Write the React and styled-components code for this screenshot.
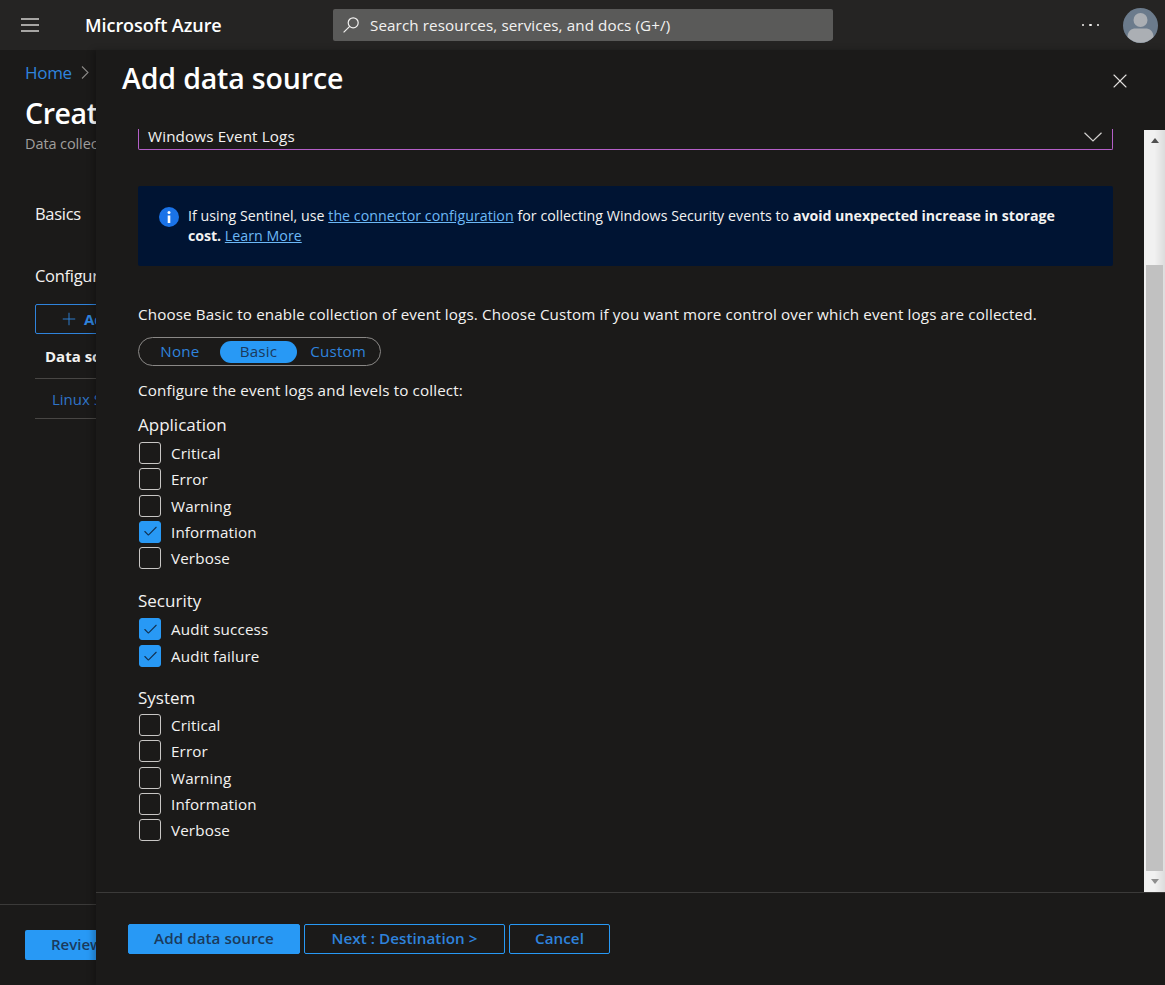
import React from "react";
import styled, { createGlobalStyle } from "styled-components";
import { X, Plus, Check } from "lucide-react";

const FONT = `"Open Sans", "Noto Sans", "Liberation Sans", sans-serif`;

const GlobalStyle = createGlobalStyle`
    html, body {
        margin: 0;
        padding: 0;
        height: 100%;
        background: #1b1a19;
    }
    body {
        font-family: ${FONT};
        color: #fff;
    }
    * { box-sizing: border-box; }
`;

const Page = styled.div`
    width: 1165px;
    height: 985px;
    position: relative;
    overflow: hidden;
    background: #1b1a19;
`;

const TopBar = styled.header`
    height: 50px;
    background: #252423;
    display: flex;
    align-items: center;
    padding-left: 21px;
`;

const LineIcon = styled.svg`
    flex: none;
    display: block;
    fill: none;
    stroke: currentColor;
`;

const MenuBtn = styled.div`
    width: 18px;
    display: flex;
    color: #d2d0ce;
`;

const Brand = styled.div`
    margin-left: 46px;
    width: 248px;
    font-size: 18px;
    font-weight: 600;
    letter-spacing: -0.05px;
`;

const SearchBox = styled.div`
    width: 500px;
    height: 32px;
    background: #5a5a59;
    border-radius: 2px;
    display: flex;
    align-items: center;
    gap: 11px;
    padding-left: 10px;
    font-size: 15.2px;
    letter-spacing: 0.1px;
    color: #f3f2f1;
`;

const BarRight = styled.div`
    margin-left: auto;
    display: flex;
    align-items: center;
    padding-right: 7px;
    gap: 24px;
`;

const Dots = styled.div`
    display: flex;
    gap: 5px;
    span {
        width: 2.5px;
        height: 2.5px;
        border-radius: 50%;
        background: #f3f2f1;
    }
`;

const Avatar = styled.svg`
    width: 35px;
    height: 35px;
    display: block;
`;

/* page behind the panel */
const Behind = styled.div`
    padding: 10px 0 0 25px;
    height: 935px;
    position: relative;
    display: flex;
    flex-direction: column;
`;

const Crumb = styled.div`
    display: flex;
    align-items: center;
    gap: 9px;
    font-size: 17px;
    letter-spacing: -0.3px;
    color: #2f83dc;
    height: 24px;
    svg { color: #8a8886; }
`;

const PageTitle = styled.div`
    margin-top: 11px;
    font-size: 28.5px;
    font-weight: 600;
    line-height: 36px;
    letter-spacing: -0.4px;
`;

const PageSub = styled.div`
    margin-top: 3px;
    font-size: 14.5px;
    color: #a19f9d;
    white-space: nowrap;
    letter-spacing: -0.1px;
`;

const SideItem = styled.div`
    font-size: 16.5px;
    letter-spacing: -0.3px;
    margin-top: ${(p) => p.$top}px;
    margin-left: 10px;
    color: #f3f2f1;
    line-height: 22px;
`;

const AddBtn = styled.div`
    margin: 17px 0 0 10px;
    width: 100px;
    height: 30px;
    border: 1px solid #2f83dc;
    border-radius: 2px;
    display: flex;
    align-items: center;
    gap: 5px;
    padding-left: 23px;
    color: #2f83dc;
    font-size: 15px;
    font-weight: 700;
`;

const TableRow = styled.div`
    margin-left: 10px;
    width: 100px;
    height: ${(p) => p.$h}px;
    border-bottom: 1px solid #484644;
    display: flex;
    align-items: center;
    padding-left: ${(p) => p.$pad}px;
    font-size: 15px;
    font-weight: ${(p) => (p.$head ? 700 : 400)};
    color: ${(p) => (p.$head ? "#f3f2f1" : "#2f74c8")};
    white-space: nowrap;
`;

const BehindFoot = styled.div`
    position: absolute;
    left: 0;
    right: 0;
    bottom: 0;
    height: 81px;
    border-top: 1px solid #3b3a39;
    padding: 25px 0 0 25px;
`;

const ReviewBtn = styled.div`
    width: 120px;
    height: 30px;
    background: #2899f5;
    border-radius: 2px;
    color: #1b3a5c;
    font-size: 15px;
    font-weight: 600;
    white-space: nowrap;
    display: flex;
    align-items: center;
    padding: 0 0 2px 26px;
`;

/* blade over the page */
const Panel = styled.section`
    position: absolute;
    top: 50px;
    left: 96px;
    right: 0;
    bottom: 0;
    background: #1b1a19;
    display: flex;
    flex-direction: column;
    box-shadow: -3px 0 6px rgba(0, 0, 0, 0.25);
`;

const PanelHead = styled.div`
    height: 79px;
    flex: none;
    display: flex;
    justify-content: space-between;
    padding: 7px 33px 0 26px;
`;

const PanelTitle = styled.h1`
    margin: 0;
    font-size: 28.5px;
    line-height: 42px;
    font-weight: 600;
    letter-spacing: -0.15px;
`;

const CloseBtn = styled.div`
    margin-top: 12px;
    color: #e1dfdd;
    display: flex;
    height: 24px;
`;

const PanelBody = styled.div`
    height: 764px;
    flex: none;
    display: flex;
    border-bottom: 1px solid #3b3a39;
`;

const Content = styled.div`
    flex: 1;
    padding: 0 31px 0 42px;
`;

const Select = styled.div`
    height: 21px;
    border: 1px solid #b45fc8;
    border-top: none;
    border-radius: 0 0 2px 2px;
    display: flex;
    align-items: center;
    justify-content: space-between;
    padding: 0 10px 7px 9px;
    font-size: 15.2px;
    letter-spacing: 0.14px;
    color: #f3f2f1;
    svg { margin-top: 2px; }
`;

const Notice = styled.div`
    margin-top: 36px;
    height: 80px;
    background: #001433;
    border-radius: 2px;
    display: flex;
    gap: 9px;
    padding: 20px 40px 0 21px;
    font-size: 14.2px;
    line-height: 20px;
    letter-spacing: 0.04px;
    color: #f3f2f1;
    b { font-weight: 700; letter-spacing: -0.05px; }
    a {
        color: #6cb8f6;
        text-decoration: underline;
    }
`;

const InfoIcon = styled.svg`
    width: 20px;
    height: 20px;
    flex: none;
    margin-top: 1px;
`;

const Para = styled.p`
    margin: ${(p) => p.$top}px 0 0;
    font-size: 15.2px;
    line-height: 20px;
    letter-spacing: 0.14px;
    color: #f3f2f1;
    white-space: nowrap;
`;

const Toggle = styled.div`
    margin-top: 13px;
    width: 243px;
    height: 29px;
    border: 1px solid #8a8886;
    border-radius: 15px;
    display: flex;
    align-items: center;
    padding: 0 3px;
`;

const ToggleOpt = styled.div`
    height: 22px;
    width: ${(p) => p.$w}px;
    padding: 0 ${(p) => p.$padR || 0}px 2px ${(p) => p.$padL || 0}px;
    border-radius: 11px;
    display: flex;
    align-items: center;
    justify-content: center;
    font-size: 15.2px;
    letter-spacing: 0.14px;
    color: ${(p) => (p.$on ? "#1b3a5c" : "#2f83dc")};
    background: ${(p) => (p.$on ? "#2899f5" : "transparent")};
`;

const Group = styled.div`
    margin-top: ${(p) => p.$top}px;
`;

const GroupName = styled.div`
    font-size: 17px;
    line-height: 24px;
    color: #f3f2f1;
`;

const CheckList = styled.div`
    margin-top: ${(p) => p.$top}px;
    display: flex;
    flex-direction: column;
    gap: ${(p) => p.$gap}px;
`;

const CheckRow = styled.div`
    display: flex;
    align-items: center;
    gap: 10px;
    height: 22px;
    padding-left: 1px;
    font-size: 15.2px;
    letter-spacing: 0.14px;
    color: #f3f2f1;
`;

const Box = styled.span`
    width: 22px;
    height: 22px;
    border-radius: 3px;
    border: 1px solid ${(p) => (p.$on ? "#2899f5" : "#c8c6c4")};
    background: ${(p) => (p.$on ? "#2899f5" : "transparent")};
    color: #12304f;
    display: flex;
    align-items: center;
    justify-content: center;
`;

const ScrollBar = styled.div`
    width: 21px;
    flex: none;
    margin-top: 1px;
    background: linear-gradient(to right, #f1f1f1 0%, #f1f1f1 50%, #dcdcdc 100%);
    display: flex;
    flex-direction: column;
    align-items: center;
    padding: 0 2px;
`;

const ScrollUp = styled.div`
    height: 135px;
    flex: none;
    width: 100%;
    display: flex;
    justify-content: center;
    padding-top: 8px;
`;

const ScrollDown = styled.div`
    flex: 1;
    width: 100%;
    display: flex;
    align-items: center;
    justify-content: center;
`;

const Arrow = styled.span`
    width: 0;
    height: 0;
    border-left: 4.5px solid transparent;
    border-right: 4.5px solid transparent;
    ${(p) =>
        p.$down
            ? `border-top: 5px solid #8e8e8e;`
            : `border-bottom: 5px solid #505050;`}
`;

const Thumb = styled.div`
    height: 606px;
    flex: none;
    width: 17px;
    background: #c1c1c1;
`;

const PanelFoot = styled.div`
    flex: 1;
    display: flex;
    gap: 4px;
    padding: 31px 0 0 32px;
`;

const Btn = styled.button`
    width: ${(p) => p.$w}px;
    height: 30px;
    border-radius: 2px;
    font-family: ${FONT};
    font-size: 15.2px;
    font-weight: 600;
    letter-spacing: 0.05px;
    padding: 0 0 2px;
    border: 1px solid #2899f5;
    cursor: pointer;
    color: ${(p) => (p.$primary ? "#1b3a5c" : "#2f83dc")};
    background: ${(p) => (p.$primary ? "#2899f5" : "transparent")};
`;

const LEVELS = ["Critical", "Error", "Warning", "Information", "Verbose"];

function Levels({ items, checked, top = 5, gap = 4.25 }) {
    return (
        <CheckList $top={top} $gap={gap}>
            {items.map((name) => {
                const on = checked.includes(name);
                return (
                    <CheckRow key={name}>
                        <Box $on={on}>{on && <Check size={17} strokeWidth={1.5} />}</Box>
                        {name}
                    </CheckRow>
                );
            })}
        </CheckList>
    );
}

export default function App() {
    return (
        <Page>
            <GlobalStyle />
            <TopBar>
                <MenuBtn>
                    <LineIcon width="18" height="14" viewBox="0 0 18 14" strokeWidth="1.3">
                        <path d="M0 1h18M0 7h18M0 13h18" />
                    </LineIcon>
                </MenuBtn>
                <Brand>Microsoft Azure</Brand>
                <SearchBox>
                    <LineIcon width="16" height="16" viewBox="0 0 16 16" strokeWidth="1.2">
                        <circle cx="10.2" cy="5.800" r="5" />
                        <path d="M6.700 9.300L0.600 15.400" />
                    </LineIcon>
                    Search resources, services, and docs (G+/)
                </SearchBox>
                <BarRight>
                    <Dots><span /><span /><span /></Dots>
                    <Avatar viewBox="0 0 35 35">
                        <circle cx="17.500" cy="17.500" r="17.500" fill="#6b7b8c" />
                        <circle cx="17.500" cy="12" r="7" fill="#abafb4" />
                        <path d="M4.500 29c0-6 4-8.500 8-8.500h10c4 0 8 2.500 8 8.500a17.500 17.500 0 0 1-26 0z" fill="#abafb4" />
                    </Avatar>
                </BarRight>
            </TopBar>

            <Behind>
                <Crumb>
                    Home
                    <LineIcon width="8" height="13" viewBox="0 0 8 13" strokeWidth="1.1">
                        <path d="M1 0.500L7 6.500L1 12.500" />
                    </LineIcon>
                </Crumb>
                <PageTitle>Create</PageTitle>
                <PageSub>Data collection rule</PageSub>
                <SideItem $top={50}>Basics</SideItem>
                <SideItem $top={40}>Configure</SideItem>
                <AddBtn><Plus size={20} strokeWidth={1.1} />Add</AddBtn>
                <TableRow $h={45} $pad={10} $head>Data sources</TableRow>
                <TableRow $h={40} $pad={17}>Linux Syslog</TableRow>
                <BehindFoot><ReviewBtn>Review + create</ReviewBtn></BehindFoot>
            </Behind>

            <Panel>
                <PanelHead>
                    <PanelTitle>Add data source</PanelTitle>
                    <CloseBtn><X size={24} strokeWidth={1.1} /></CloseBtn>
                </PanelHead>
                <PanelBody>
                    <Content>
                        <Select>
                            Windows Event Logs
                            <LineIcon width="18" height="10" viewBox="0 0 18 10" strokeWidth="1.2" color="#d2d0ce">
                                <path d="M0.500 0.700L9 9L17.500 0.700" />
                            </LineIcon>
                        </Select>
                        <Notice>
                            <InfoIcon viewBox="0 0 20 20">
                                <circle cx="10" cy="10" r="10" fill="#1a73e8" />
                                <circle cx="10" cy="5.500" r="1.500" fill="#fff" />
                                <rect x="8.700" y="8.500" width="2.600" height="7.500" fill="#fff" />
                            </InfoIcon>
                            <div>
                                If using Sentinel, use <a href="#connector">the connector configuration</a> for
                                collecting Windows Security events to <b>avoid unexpected increase in storage
                                cost.</b> <a href="#learn">Learn More</a>
                            </div>
                        </Notice>
                        <Para $top={38}>
                            Choose Basic to enable collection of event logs. Choose Custom if you want more control over which event logs are collected.
                        </Para>
                        <Toggle>
                            <ToggleOpt $w={78} $padR={2}>None</ToggleOpt>
                            <ToggleOpt $w={78} $on>Basic</ToggleOpt>
                            <ToggleOpt $w={80} $padL={2}>Custom</ToggleOpt>
                        </Toggle>
                        <Para $top={14}>Configure the event logs and levels to collect:</Para>
                        <Group $top={13}>
                            <GroupName>Application</GroupName>
                            <Levels items={LEVELS} checked={["Information"]} />
                        </Group>
                        <Group $top={20}>
                            <GroupName>Security</GroupName>
                            <Levels items={["Audit success", "Audit failure"]} checked={["Audit success", "Audit failure"]} gap={5} />
                        </Group>
                        <Group $top={19}>
                            <GroupName>System</GroupName>
                            <Levels items={LEVELS} checked={[]} top={4} />
                        </Group>
                    </Content>
                    <ScrollBar>
                        <ScrollUp><Arrow /></ScrollUp>
                        <Thumb />
                        <ScrollDown><Arrow $down /></ScrollDown>
                    </ScrollBar>
                </PanelBody>
                <PanelFoot>
                    <Btn $primary $w={172}>Add data source</Btn>
                    <Btn $w={201}>Next : Destination &gt;</Btn>
                    <Btn $w={101}>Cancel</Btn>
                </PanelFoot>
            </Panel>
        </Page>
    );
}
